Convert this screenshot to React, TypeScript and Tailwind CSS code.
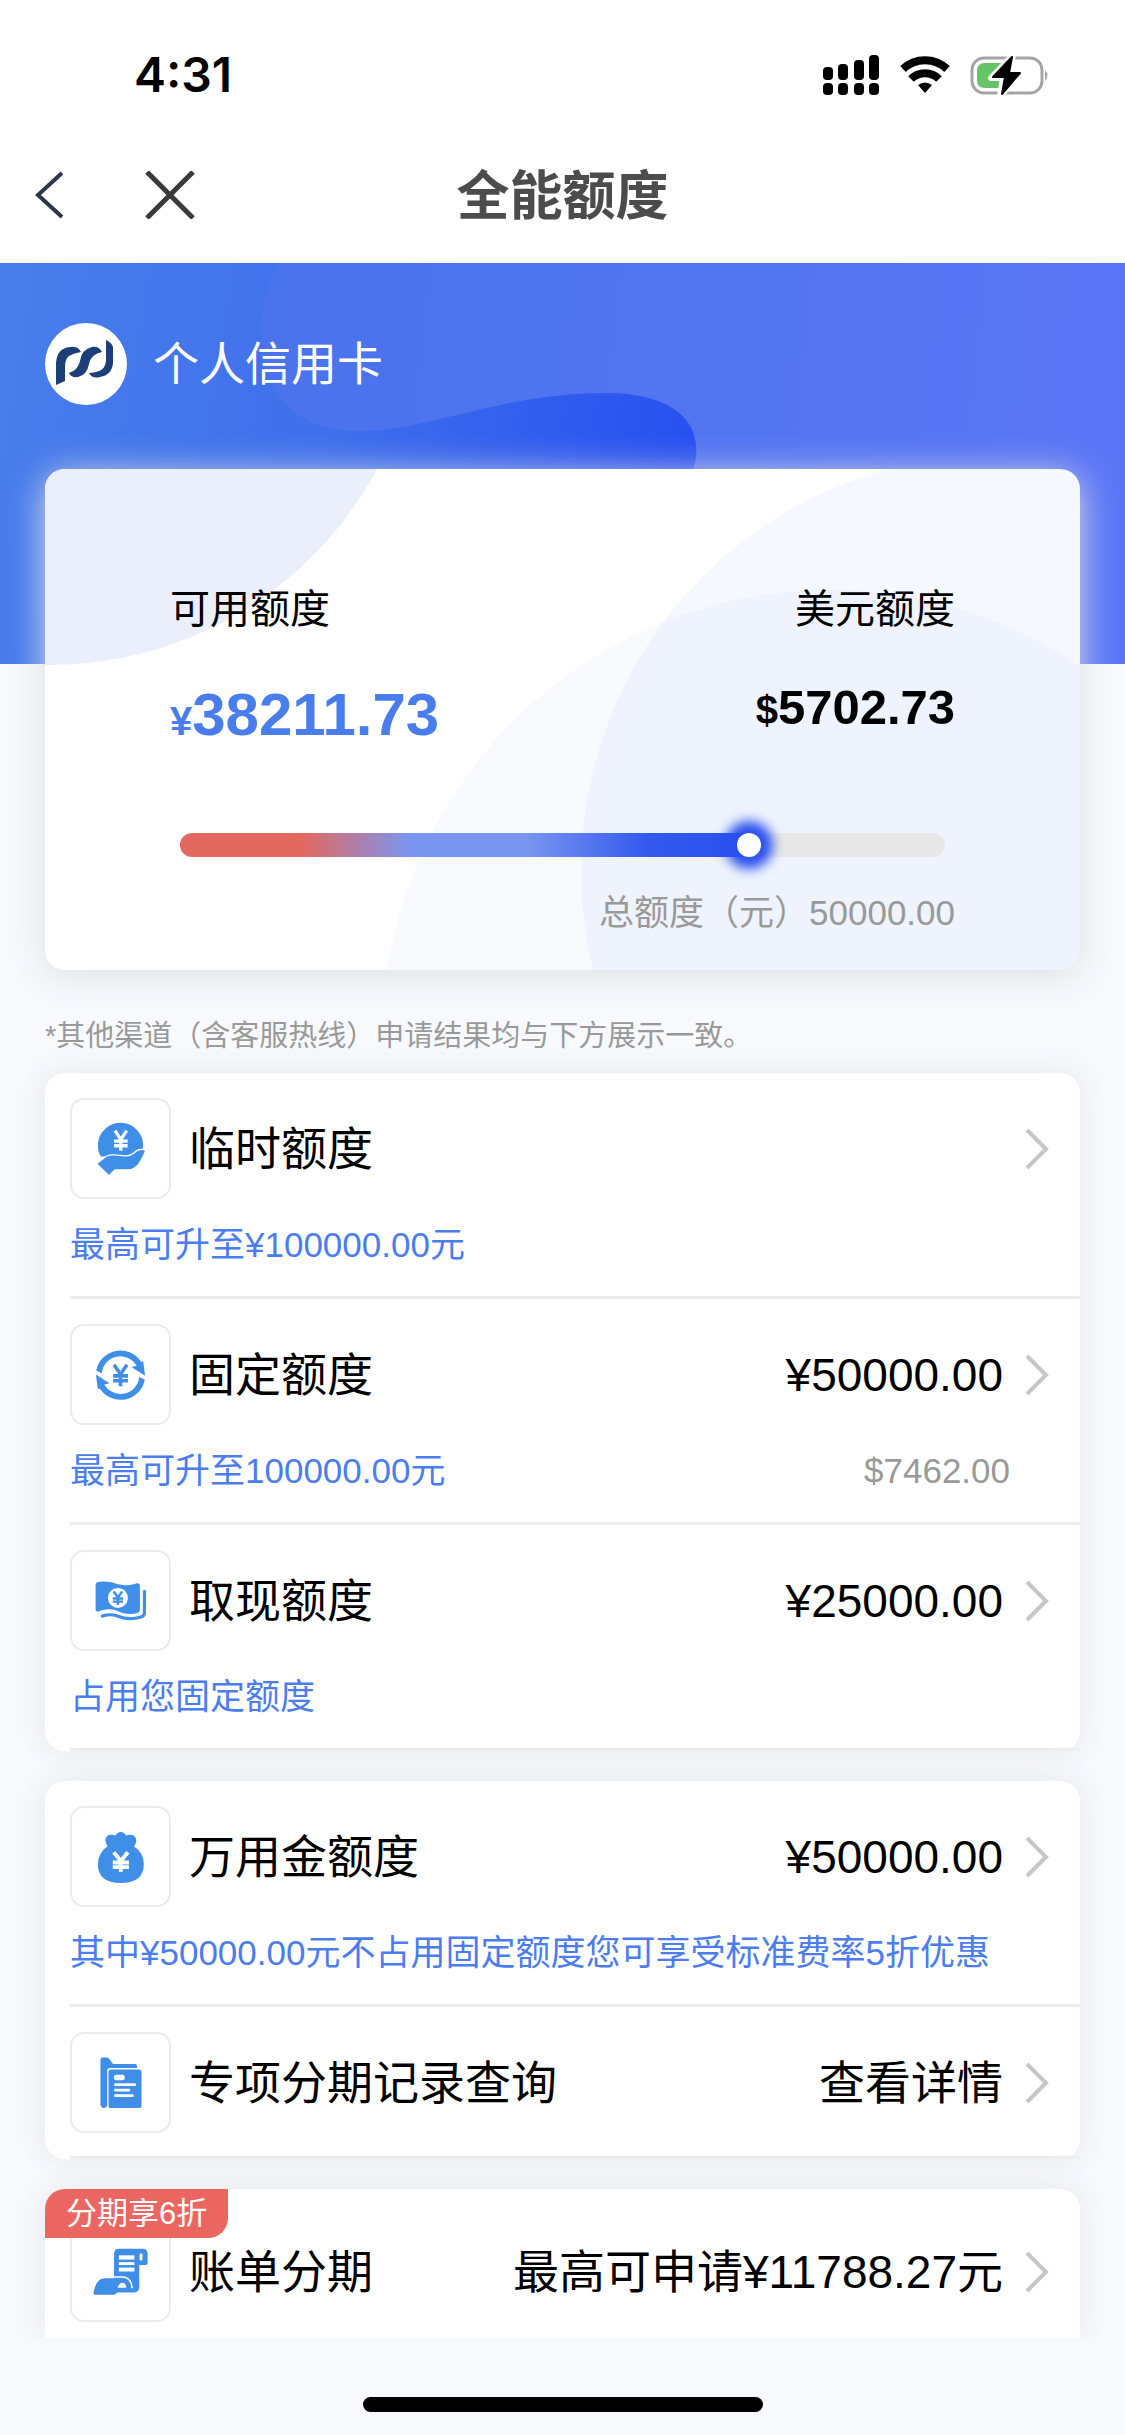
/*
 * Credit limit overview — hero card with the available balance,
 * followed by grouped limit rows
 */
import type { ReactNode } from "react";

// Yen sign used inside the row icons
function Yen({ x, y, w = 40, h = 62, color = "#fff" }: { x: number; y: number; w?: number; h?: number; color?: string }) {
  const mid = y + h * 0.44;
  const l = x - w / 2;
  const r = x + w / 2;
  return (
    <path
      d={`M${l + 3} ${y} L${x} ${mid} L${r - 3} ${y} M${x} ${mid - 3} V${y + h} M${l} ${y + h * 0.52} H${r} M${l} ${y + h * 0.75} H${r}`}
      fill="none"
      stroke={color}
      strokeWidth={w * 0.24}
    />
  );
}

function HandCoinIcon() {
  return (
    <svg viewBox="30 25 300 300" className="size-full" fill="#3f8ee8">
      <path d="M119 200 A70 70 0 1 1 241 200 Z" />
      <path
        d="M106 222 L128 205 Q140 192 162 195 L194 198 Q210 199 220 190 Q232 178 244 178 Q254 178 258 182 Q252 198 240 218 Q227 241 205 241 H163 L144 259 Z"
        stroke="#fff"
        strokeWidth="4"
      />
      <Yen x={181} y={120} w={42} />
    </svg>
  );
}

function CycleIcon() {
  const half = "M105 163 A76 76 0 0 1 244 136 L250 133 L256 179 L214 152 L230 148 A58 58 0 0 0 122 171 Z";
  return (
    <svg viewBox="30 25 300 300" className="size-full" fill="#3f8ee8">
      <path d={half} />
      <path d={half} transform="rotate(180 180 177)" />
      <Yen x={180} y={145} w={46} h={66} color="#3f8ee8" />
    </svg>
  );
}

function CashIcon() {
  return (
    <svg viewBox="30 28 300 300" className="size-full" fill="#3f8ee8">
      <path d="M103 130 Q103 122 112 121 C150 115 165 130 195 131 C213 131 223 128 231 125 Q240 124 240 133 V207 Q240 214 232 217 C205 225 185 216 165 208 C145 202 125 206 112 212 Q103 214 103 206 Z" />
      <path
        d="M254 150 V215 Q254 226 243 229 C215 238 195 236 170 226 C150 218 135 223 124 226"
        fill="none"
        stroke="#3f8ee8"
        strokeWidth="10"
        strokeLinecap="round"
      />
      <circle cx="172" cy="170" r="31" fill="#fff" />
      <Yen x={172} y={150} w={32} h={42} color="#3f8ee8" />
    </svg>
  );
}

function MoneyBagIcon() {
  return (
    <svg viewBox="30 30 300 300" className="size-full" fill="#3f8ee8">
      <path d="M140 148 Q133 140 133 129 Q135 113 152 113 Q160 113 165 115 Q170 104 181 104 Q192 104 197 115 Q203 113 211 113 Q227 114 229 130 Q229 140 222 149 Q252 168 252 204 Q252 262 181 262 Q110 262 110 204 Q111 168 140 148 Z" />
      <Yen x={181} y={167} w={50} h={61} />
    </svg>
  );
}

function FolderIcon() {
  return (
    <svg viewBox="30 35 300 300" className="size-full" fill="#3f8ee8">
      <path d="M118 115 Q118 108 125 108 H138 Q143 108 146 113 L157 128 H226 Q231 128 231 133 V140 H148 Q139 140 139 150 V256 Q136 264 128 264 Q118 262 118 252 Z" />
      <rect x="143" y="145" width="102" height="119" rx="8" />
      <g fill="#fff">
        <rect x="160" y="161" width="33" height="17" rx="6" />
        <rect x="160" y="187" width="68" height="9" rx="4" />
        <rect x="160" y="204" width="50" height="9" rx="4" />
        <rect x="160" y="221" width="61" height="9" rx="4" />
      </g>
    </svg>
  );
}

function BillIcon() {
  return (
    <svg viewBox="90 126 300 300" className="size-full" fill="#3f8ee8">
      <path d="M220 222 Q220 206 236 206 H308 Q324 206 324 222 V250 Q324 256 318 256 H298 V323 Q298 341 280 341 H230 L222 348 H160 Q155 347 157 340 Q165 298 190 297 H220 Z" />
      <g fill="#fff">
        <rect x="235" y="226" width="48" height="13" />
        <rect x="235" y="247" width="48" height="9" />
        <rect x="235" y="264" width="48" height="12" />
        <rect x="299" y="220" width="9" height="22" rx="4" />
        <path d="M231 326 Q236 311 247 311 Q256 311 258 326 Z" />
      </g>
      <path d="M219 293 H250 Q274 297 276 328" fill="none" stroke="#fff" strokeWidth="5" />
    </svg>
  );
}

function Chevron() {
  return (
    <svg viewBox="0 0 24 42" className="ml-[22px] h-[42px] w-6 shrink-0" fill="none" stroke="#c5c5ca" strokeWidth="4">
      <path d="M2 2 L21 21 L2 40" />
    </svg>
  );
}

// iOS style status bar
function StatusBar() {
  return (
    <div className="flex h-[130px] items-center justify-between pt-5 pr-[75px] pl-[134px]">
      <span className="font-[Inter,sans-serif] text-[48px] leading-[56px] font-semibold text-black">4:31</span>
      <svg viewBox="0 0 228 40" className="h-10 w-[228px]">
        <g>
          <rect x="1" y="12" width="10" height="13" rx="4" />
          <rect x="16" y="9" width="10" height="16" rx="4" />
          <rect x="32" y="5" width="10" height="20" rx="4" />
          <rect x="47" y="0" width="10" height="25" rx="4" />
          <rect x="1" y="28" width="10" height="12" rx="4" />
          <rect x="16" y="28" width="10" height="12" rx="4" />
          <rect x="32" y="28" width="10" height="12" rx="4" />
          <rect x="47" y="28" width="10" height="12" rx="4" />
        </g>
        <g fill="none" stroke="#000" strokeWidth="8">
          <path d="M81 14 A32 32 0 0 1 125 14" />
          <path d="M89 24 A20 20 0 0 1 117 24" />
        </g>
        <path d="M96 30 Q103 25 110 30 L103 38 Z" />
        <rect x="150" y="3" width="70" height="35" rx="12" fill="none" stroke="#a5a5a7" strokeWidth="3" />
        <path d="M223 15 Q228 20 223 26 Z" fill="#a5a5a7" />
        <path d="M163 8 H184 V33 H163 Q155 33 155 25 V16 Q155 8 163 8 Z" fill="#66c466" />
        <path d="M191 0 L169 23 H181 L178 41 L200 17 H188 Z" stroke="#fff" strokeWidth="6" strokeLinejoin="round" />
        <path d="M190 2 L171 22 H183 L180 39 L198 18 H187 Z" stroke="#000" strokeWidth="2" strokeLinejoin="round" />
      </svg>
    </div>
  );
}

function NavBar() {
  return (
    <nav className="relative flex h-[133px] items-center pb-1 pl-[34px]">
      <button type="button" aria-label="返回" className="mr-[80px]">
        <svg viewBox="0 0 30 48" className="h-12 w-[30px]" fill="none" stroke="#2d3748" strokeWidth="4">
          <path d="M28 2 L4 24 L28 46" />
        </svg>
      </button>
      <button type="button" aria-label="关闭">
        <svg viewBox="0 0 52 48" className="h-12 w-[52px]" fill="none" stroke="#3a3a3a" strokeWidth="5">
          <path d="M3 1 L49 47 M49 1 L3 47" />
        </svg>
      </button>
      <h1 className="pointer-events-none absolute inset-x-0 pt-1 text-center text-[53px] leading-[60px] font-bold text-[#4c4c4c]">
        全能额度
      </h1>
    </nav>
  );
}

function Hero() {
  return (
    <section className="relative h-[401px] overflow-hidden px-[45px] pt-[60px]">
      <svg viewBox="0 0 1125 401" preserveAspectRatio="none" className="absolute inset-0 size-full">
        <defs>
          <linearGradient id="base" x1="0" y1="0" x2="700" y2="120" gradientUnits="userSpaceOnUse">
            <stop offset="0" stopColor="#497eeb" />
            <stop offset="0.5" stopColor="#3f6fec" />
            <stop offset="1" stopColor="#2850f0" />
          </linearGradient>
          <linearGradient id="blob" x1="250" y1="0" x2="1125" y2="100" gradientUnits="userSpaceOnUse">
            <stop offset="0" stopColor="#4973ec" />
            <stop offset="1" stopColor="#5b76f6" />
          </linearGradient>
        </defs>
        <rect width="1125" height="401" fill="url(#base)" />
        <path
          d="M280 0 C245 55 250 168 358 168 C430 168 500 130 606 130 C680 130 708 165 692 210 V401 H1125 V0 Z"
          fill="url(#blob)"
        />
      </svg>
      <div className="relative flex items-center gap-[26px]">
        <svg viewBox="0 0 82 82" className="size-[82px]">
          <circle cx="41" cy="41" r="41" fill="#fff" />
          <g fill="#1c3f77">
            <path d="M11 62 V40 Q12 25 25 24 Q33 23 36 29 Q29 30 24 33 Q20 36 20 44 V58 Z" />
            <path d="M57 29 Q54 23 47 24 Q37 26 35 38 Q33 47 24 50 Q26 55 33 54 Q42 52 44 41 Q46 31 57 29 Z" />
            <path d="M44 50 Q47 56 55 54 Q67 52 68 40 V24 Q67 20 61 17 V38 Q60 46 54 48 Q49 50 44 50 Z" />
          </g>
        </svg>
        <p className="text-[46px] leading-[60px] text-white">个人信用卡</p>
      </div>
    </section>
  );
}

function BalanceCard() {
  return (
    <section className="relative mx-[45px] -mt-[195px] rounded-[20px] bg-white shadow-[0_6px_36px_#dedfe3]">
      <svg viewBox="0 0 1035 501" preserveAspectRatio="none" className="absolute inset-0 size-full rounded-[20px]">
        <circle cx="5" cy="-175" r="371" fill="#ebeffc" />
        <circle cx="951" cy="401" r="415" fill="#4f8ee8" opacity="0.06" />
        <circle cx="785" cy="569" r="448" fill="#4f8ae8" opacity="0.04" />
      </svg>
      <div className="relative px-[125px] pt-[112px] pb-8">
        <div className="flex justify-between">
          <div>
            <p className="text-[40px] leading-[56px]">可用额度</p>
            <p className="mt-[42px] text-[60px] leading-[72px] font-bold text-[#4a7dec]">
              <span className="text-[40px] leading-none">¥</span>38211.73
            </p>
          </div>
          <div className="text-right">
            <p className="text-[40px] leading-[56px]">美元额度</p>
            <p className="mt-[34px] text-[49px] leading-[72px] font-bold">
              <span className="text-[40px] leading-none">$</span>5702.73
            </p>
          </div>
        </div>
        <div className="mx-[10px] mt-[82px] flex">
          <input
            type="range"
            aria-label="可用额度"
            min={0}
            max={50000}
            defaultValue={37600}
            className="h-6 w-full appearance-none rounded-full bg-[linear-gradient(90deg,#e2695f_0%,#e2695f_16%,#7a95f0_30%,#7a95f0_45%,#3459ee_61%,#2a50ee_74%,#e8e8e8_74%)] [&::-webkit-slider-thumb]:size-6 [&::-webkit-slider-thumb]:appearance-none [&::-webkit-slider-thumb]:rounded-full [&::-webkit-slider-thumb]:bg-white [&::-webkit-slider-thumb]:shadow-[0_0_12px_12px_#2a50ee]"
          />
        </div>
        <p className="mt-[31px] text-right text-[35px] leading-[50px] text-[#999]">总额度（元）50000.00</p>
      </div>
    </section>
  );
}

// One limit entry: icon, title, optional amount and hint line
function LimitRow({
  icon,
  title,
  value,
  hint,
  extra,
  badge,
}: {
  icon: ReactNode;
  title: string;
  value?: string;
  hint?: string;
  extra?: string;
  badge?: string;
}) {
  return (
    <a href="#" className={`relative block pl-[25px] ${badge ? "pt-8" : "pt-[25px]"}`}>
      <div className="flex items-center pr-[31px]">
        <span className="size-[101px] shrink-0 rounded-[14px] border-2 border-[#ebebeb]">{icon}</span>
        <span className="ml-[18px] text-[46px] leading-[60px]">{title}</span>
        <span className="ml-auto text-[46px] leading-[60px]">{value}</span>
        <Chevron />
      </div>
      {hint && (
        <div className="mt-[21px] flex justify-between pr-[70px] pb-[26px] text-[35px] leading-[50px]">
          <span className="text-[#4b7df0]">{hint}</span>
          <span className="text-[#999]">{extra}</span>
        </div>
      )}
      {badge ? (
        <span className="absolute top-0 left-0 rounded-tl-[20px] rounded-br-[20px] bg-[#ec6661] px-[21px] text-[31px] leading-[49px] text-white">
          {badge}
        </span>
      ) : (
        <div className={`h-[3px] bg-[#ededee] ${hint ? "" : "mt-[23px]"}`} />
      )}
    </a>
  );
}

function LimitGroup({ children, open = false }: { children: ReactNode; open?: boolean }) {
  return (
    <section
      className={`mx-[45px] bg-white shadow-[0_0_30px_#e6e7ea] ${open ? "rounded-t-[20px] pb-4" : "rounded-[20px]"}`}
    >
      {children}
    </section>
  );
}

export default function App() {
  return (
    <div className='flex min-h-screen flex-col bg-[#f8f9fd] font-["Liberation_Sans","Noto_Sans_CJK_SC",sans-serif] text-black'>
      <header className="bg-white">
        <StatusBar />
        <NavBar />
      </header>
      <main className="overflow-hidden">
        <Hero />
        <BalanceCard />
        <p className="mx-[45px] mt-11 mb-[15px] text-[29px] leading-[44px] text-[#999]">
          *其他渠道（含客服热线）申请结果均与下方展示一致。
        </p>
        <div className="flex flex-col gap-[30px]">
          <LimitGroup>
            <LimitRow icon={<HandCoinIcon />} title="临时额度" hint="最高可升至¥100000.00元" />
            <LimitRow
              icon={<CycleIcon />}
              title="固定额度"
              value="¥50000.00"
              hint="最高可升至100000.00元"
              extra="$7462.00"
            />
            <LimitRow icon={<CashIcon />} title="取现额度" value="¥25000.00" hint="占用您固定额度" />
          </LimitGroup>
          <LimitGroup>
            <LimitRow
              icon={<MoneyBagIcon />}
              title="万用金额度"
              value="¥50000.00"
              hint="其中¥50000.00元不占用固定额度您可享受标准费率5折优惠"
            />
            <LimitRow icon={<FolderIcon />} title="专项分期记录查询" value="查看详情" />
          </LimitGroup>
          <LimitGroup open>
            <LimitRow icon={<BillIcon />} title="账单分期" value="最高可申请¥11788.27元" badge="分期享6折" />
          </LimitGroup>
        </div>
      </main>
      <footer className="flex justify-center pt-[59px] pb-[22px]">
        <div className="h-[15px] w-[400px] rounded-full bg-black" />
      </footer>
    </div>
  );
}
